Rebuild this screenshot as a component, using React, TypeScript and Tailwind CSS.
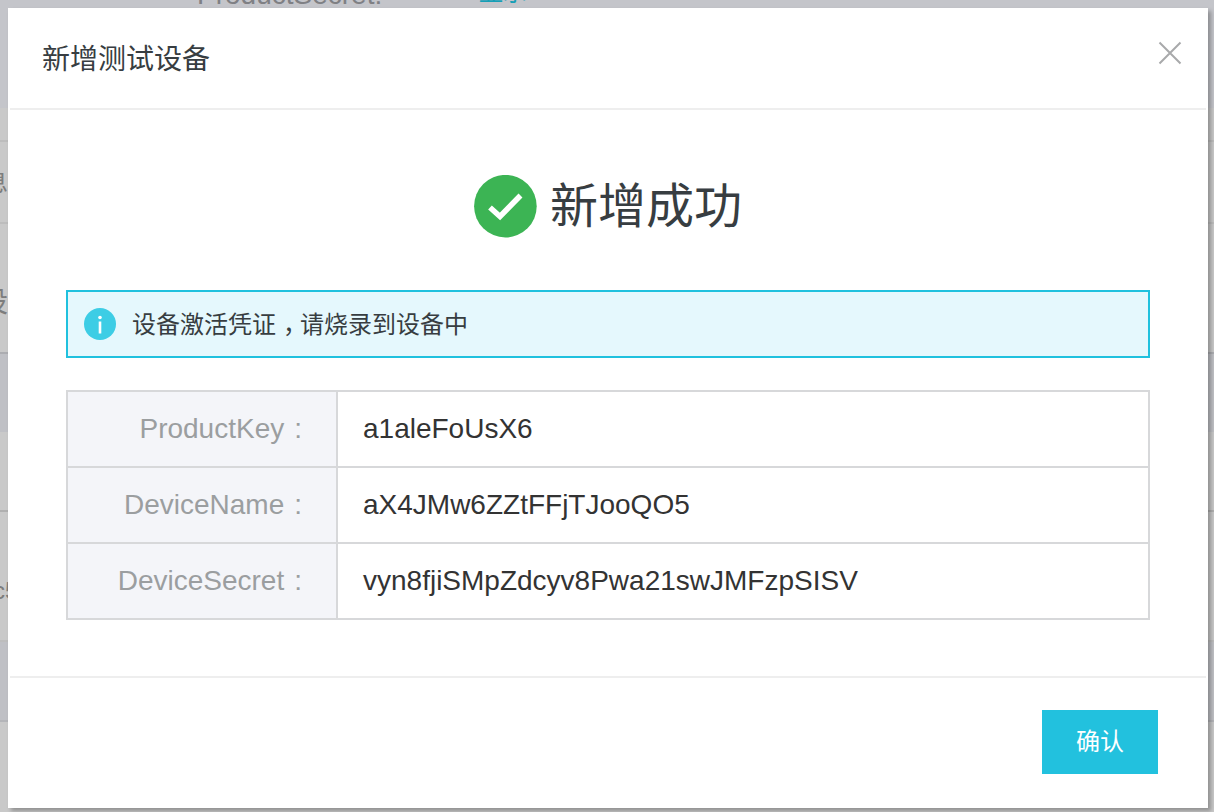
import React from "react";

const CJK = "font-['Helvetica','Liberation_Sans','Noto_Sans_CJK_SC',sans-serif]";

function Row({ label, value, last }: { label: string; value: string; last?: boolean }) {
  return (
    <div className={last ? "flex h-[74px]" : "flex h-[76px] border-b-2 border-[#d7d8da]"}>
      <div className="flex w-[268px] shrink-0 items-center justify-end bg-[#f4f5f9] pr-[34px] text-[28px] text-[#9b9ea0]">
        {label}
        <span className="ml-[10px]">:</span>
      </div>
      <div className="flex flex-1 items-center border-l-2 border-[#d7d8da] pl-[25px] text-[28px] text-[#333333]">{value}</div>
    </div>
  );
}

export default function App() {
  return (
    <div className={`relative h-[812px] w-[1214px] overflow-hidden bg-[#c9c9c9] ${CJK}`}>
      {/* dimmed page behind the dialog */}
      <div className="flex h-full flex-col text-[#7d7d7d]">
        <div className="relative h-[108px] overflow-hidden bg-[#c4c5ca]">
          <div className="absolute top-[-25px] left-[197px] text-[28px] leading-[40px] text-[#7f8084]">ProductSecret:</div>
          <div className="absolute top-[-27px] left-[479px] text-[24px] leading-[40px] text-[#169fb6]">显示</div>
        </div>
        <div className="h-[34px] border-b-2 border-[#bdbdbd]" />
        <div className="flex h-[82px] items-center border-b-2 border-[#bdbdbd] pt-[2px] text-[24px]">
          <span className="ml-[-16px]">息</span>
        </div>
        <div className="flex h-[130px] items-center border-b-2 border-[#acadb1] pt-[30px] text-[28px]">
          <span className="ml-[-20px]">设</span>
        </div>
        <div className="h-[78px] bg-[#bfc0c5]" />
        <div className="h-[80px] border-b-2 border-[#b0b0b0]" />
        <div className="flex h-[130px] items-center border-b-2 border-[#bdbdbd] pt-[30px] text-[24px]">
          <span className="ml-[-7px]">c5</span>
        </div>
        <div className="h-[80px] border-b-2 border-[#b4b5b9] bg-[#bfc0c5]" />
      </div>

      {/* dialog */}
      <div className="absolute top-[8px] left-[8px] flex h-[800px] w-[1200px] flex-col bg-white shadow-[3px_3px_4px_rgba(0,0,0,0.28)]">
        <div className="relative mx-[2px] flex h-[102px] shrink-0 items-center border-b-2 border-[#eeeeee] pt-[4px] pl-[32px] text-[28px] text-[#373d41]">
          新增测试设备
          <svg className="absolute top-[33px] right-[24px]" width="24" height="24" viewBox="0 0 24 24" fill="none" stroke="#a8a9ab" strokeWidth="2">
            <path d="M1.5 1.5 22.5 22.5M22.5 1.5 1.5 22.5" />
          </svg>
        </div>

        <div className="flex flex-1 flex-col px-[58px]">
          <div className="mt-[65px] flex h-[62px] items-center justify-center gap-[13px] text-[48px] text-[#373d41]">
            <svg width="63" height="63" viewBox="0 0 63 63">
              <circle cx="31.4" cy="31.2" r="31.3" fill="#3cb454" />
              <path d="M16 32.5 26 41.5 46.5 20.5" fill="none" stroke="#ffffff" strokeWidth="5.5" />
            </svg>
            <span className="pt-[2px] leading-[62px]">新增成功</span>
          </div>

          <div className="mt-[53px] flex h-[68px] items-center border-2 border-[#20c1de] bg-[#e5f8fd] pl-[16px] text-[24px] text-[#373d41]">
            <svg width="32" height="32" viewBox="0 0 32 32">
              <circle cx="16" cy="16" r="16" fill="#3dcde5" />
              <circle cx="16" cy="9.5" r="1.8" fill="#ffffff" />
              <rect x="14.7" y="13.5" width="2.6" height="12" fill="#ffffff" />
            </svg>
            <span className="ml-[16px] pt-[2px]">
              设备激活凭证<span className="mr-[5px] ml-[7px] [font-feature-settings:'halt']">，</span>请烧录到设备中
            </span>
          </div>

          <div className="mt-[32px] border-2 border-[#d7d8da]">
            <Row label="ProductKey" value="a1aleFoUsX6" />
            <Row label="DeviceName" value="aX4JMw6ZZtFFjTJooQO5" />
            <Row label="DeviceSecret" value="vyn8fjiSMpZdcyv8Pwa21swJMFzpSISV" last />
          </div>
        </div>

        <div className="mx-[2px] flex h-[132px] shrink-0 items-start justify-end border-t-2 border-[#eeeeee] pt-[32px] pr-[48px]">
          <button className="h-[64px] w-[116px] bg-[#22c1de] text-[24px] text-white">确认</button>
        </div>
      </div>
    </div>
  );
}
